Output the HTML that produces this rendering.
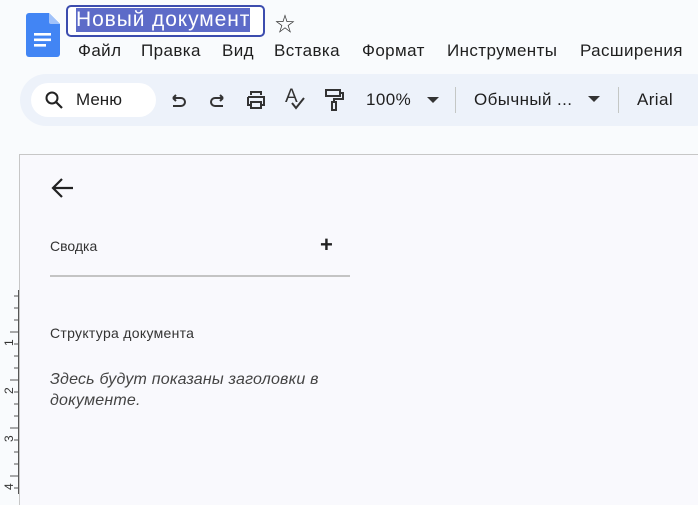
<!DOCTYPE html>
<html><head><meta charset="utf-8"><style>
body{margin:0;width:698px;height:494px;overflow:hidden;background:#f9fbfd;font-family:"Liberation Sans","Noto Sans CJK SC",sans-serif;position:relative;color:#1f1f1f}
.a{position:absolute;white-space:nowrap}
.m{position:absolute;top:41px;font-size:17px;color:#1f1f1f;letter-spacing:0.4px}
</style></head><body>
<svg class="a" style="left:26px;top:13px" width="34" height="44" viewBox="0 0 34 44">
<path d="M3 0h20l11 11v30a3 3 0 0 1-3 3H3a3 3 0 0 1-3-3V3a3 3 0 0 1 3-3z" fill="#4285f4"/>
<path d="M23 0v9a2 2 0 0 0 2 2h9z" fill="#a1c2fa"/>
<rect x="8" y="20" width="17" height="2.6" fill="#fff"/><rect x="8" y="25.5" width="17" height="2.6" fill="#fff"/><rect x="8" y="31" width="12" height="2.6" fill="#fff"/>
</svg>
<div class="a" style="left:66px;top:5px;width:195px;height:28px;border:2px solid #3c4cae;border-radius:5px;background:#fff"></div>
<div class="a" style="left:76px;top:8px;width:174px;height:24px;background:#5d6bc8"></div>
<div class="a" style="left:76px;top:6px;font-size:21px;color:#fff;line-height:28px;letter-spacing:0.9px">Новый документ</div>
<div class="a" style="left:275px;top:8px;font-size:20px;color:#333">☆</div>
<div class="m" style="left:78px">Файл</div>
<div class="m" style="left:141px">Правка</div>
<div class="m" style="left:222px">Вид</div>
<div class="m" style="left:274px">Вставка</div>
<div class="m" style="left:362px">Формат</div>
<div class="m" style="left:447px">Инструменты</div>
<div class="m" style="left:580px">Расширения</div>
<div class="a" style="left:20px;top:74px;width:700px;height:52px;border-radius:26px;background:#edf2fa"></div>
<div class="a" style="left:31px;top:83px;width:125px;height:34px;border-radius:17px;background:#fff"></div>
<svg class="a" style="left:44px;top:90px" width="20" height="20" viewBox="0 0 20 20"><circle cx="8" cy="8" r="5.5" fill="none" stroke="#222" stroke-width="2"/><path d="M12 12l6 6" stroke="#222" stroke-width="2.2"/></svg>
<div class="a" style="left:76px;top:90px;font-size:17px">Меню</div>
<svg class="a" style="left:168px;top:89px" width="120" height="22" viewBox="0 0 120 22" fill="none" stroke="#333" stroke-width="2">
<path d="M5 9h8a4 4 0 0 1 0 8H5M5 9l3-3M5 9l3 3"/>
<path d="M55 9h-8a4 4 0 0 0 0 8h8M55 9l-3-3M55 9l-3 3"/>
<path d="M83 6V3h10v3M80 8h16v8h-3M80 8v8h3M83 13h10v6H83z"/>
</svg>
<div class="a" style="left:285px;top:86px;font-size:19px;color:#333">A</div>
<svg class="a" style="left:290px;top:96px" width="16" height="14"><path d="M2 7l4 5 8-10" fill="none" stroke="#333" stroke-width="2"/></svg>
<svg class="a" style="left:322px;top:88px" width="24" height="24" viewBox="0 0 24 24" fill="none" stroke="#333" stroke-width="2"><rect x="4" y="2" width="14" height="6"/><path d="M18 5h3v6h-9v3"/><rect x="10" y="14" width="4" height="8"/></svg>
<div class="a" style="left:366px;top:90px;font-size:17px;letter-spacing:0.4px">100%</div>
<svg class="a" style="left:427px;top:97px" width="12" height="7"><path d="M0 0h12L6 6z" fill="#333"/></svg>
<div class="a" style="left:455px;top:87px;width:1px;height:26px;background:#c4c7c5"></div>
<div class="a" style="left:474px;top:90px;font-size:17px;letter-spacing:0.4px">Обычный ...</div>
<svg class="a" style="left:588px;top:96px" width="12" height="7"><path d="M0 0h12L6 6z" fill="#333"/></svg>
<div class="a" style="left:618px;top:87px;width:1px;height:26px;background:#c4c7c5"></div>
<div class="a" style="left:637px;top:90px;font-size:17px;letter-spacing:0.4px">Arial</div>
<div class="a" style="left:19px;top:154px;width:700px;height:350px;border-left:1px solid #c7c7c7;border-top:1px solid #c7c7c7;background:#f9f9fd"></div>
<svg class="a" style="left:50px;top:177px" width="26" height="22" viewBox="0 0 26 22"><path d="M23 11H3M12 2L3 11l9 9" fill="none" stroke="#222" stroke-width="2.2"/></svg>
<div class="a" style="left:50px;top:238px;font-size:14px;color:#333">Сводка</div>
<div class="a" style="left:320px;top:232px;font-size:22px;color:#222;font-weight:bold">+</div>
<div class="a" style="left:50px;top:275px;width:300px;height:2px;background:#c4c4c4"></div>
<div class="a" style="left:50px;top:325px;font-size:14px;color:#333;letter-spacing:0.3px">Структура документа</div>
<div class="a" style="left:50px;top:369px;font-size:16px;color:#444;font-style:italic;line-height:21px;letter-spacing:0.2px">Здесь будут показаны заголовки в<br>документе.</div>
<svg class="a" style="left:0;top:290px" width="19" height="204">
<g stroke="#555" stroke-width="1">
<path d="M14 6h5M14 18h5M14 30h5M10 42h9M14 54h5M14 66h5M14 78h5M10 90h9M14 102h5M14 114h5M14 126h5M10 138h9M14 150h5M14 162h5M14 174h5M10 186h9M14 198h5"/>
<path d="M18.5 0v204"/>
</g>
<g font-size="12" fill="#333" font-family="Liberation Sans">
<text transform="translate(13 56) rotate(-90)">1</text>
<text transform="translate(13 104) rotate(-90)">2</text>
<text transform="translate(13 152) rotate(-90)">3</text>
<text transform="translate(13 200) rotate(-90)">4</text>
</g></svg>
</body></html>
